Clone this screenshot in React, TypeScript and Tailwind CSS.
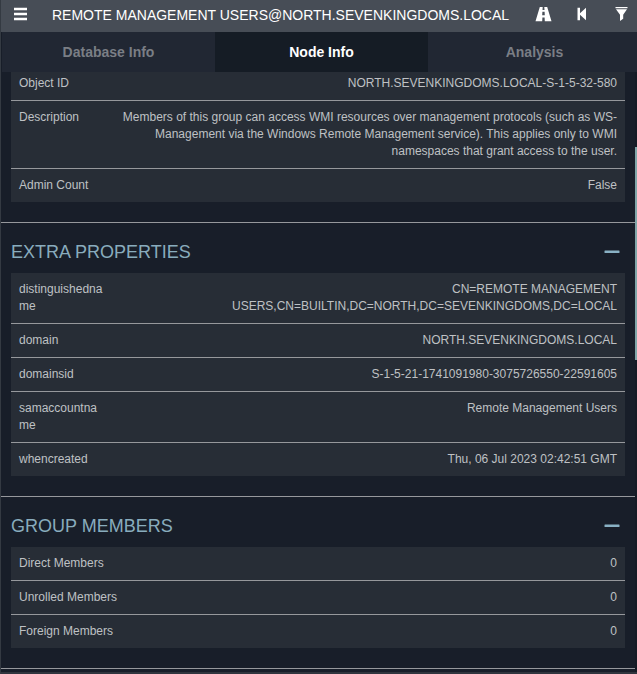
import type { ReactNode } from "react";

type Row = { label: string; value: string };

const overview: Row[] = [
  { label: "Object ID", value: "NORTH.SEVENKINGDOMS.LOCAL-S-1-5-32-580" },
  {
    label: "Description",
    value:
      "Members of this group can access WMI resources over management protocols (such as WS-Management via the Windows Remote Management service). This applies only to WMI namespaces that grant access to the user.",
  },
  { label: "Admin Count", value: "False" },
];

const extra: Row[] = [
  {
    label: "distinguishedname",
    value: "CN=REMOTE MANAGEMENT USERS,CN=BUILTIN,DC=NORTH,DC=SEVENKINGDOMS,DC=LOCAL",
  },
  { label: "domain", value: "NORTH.SEVENKINGDOMS.LOCAL" },
  { label: "domainsid", value: "S-1-5-21-1741091980-3075726550-22591605" },
  { label: "samaccountname", value: "Remote Management Users" },
  { label: "whencreated", value: "Thu, 06 Jul 2023 02:42:51 GMT" },
];

const members: Row[] = [
  { label: "Direct Members", value: "0" },
  { label: "Unrolled Members", value: "0" },
  { label: "Foreign Members", value: "0" },
];

function PropertyTable({ rows, name, narrow }: { rows: Row[]; name: string; narrow?: boolean }) {
  return (
    <table aria-label={name} className="w-full table-fixed border-separate border-spacing-0 bg-[#272d36] text-xs/[17px] text-[#bfc1c4]">
      <colgroup>
        <col className={narrow ? "w-[102px]" : "w-1/2"} />
        <col />
      </colgroup>
      <tbody className="[&>tr:not(:last-child)>*]:border-b [&>tr:not(:last-child)>*]:border-[#96989c]">
        {rows.map((row) => (
          <tr key={row.label}>
            <th scope="row" className="p-2 text-left align-top font-normal wrap-break-word">
              {row.label}
            </th>
            <td className="p-2 text-right align-top">{row.value}</td>
          </tr>
        ))}
      </tbody>
    </table>
  );
}

function Section({ title, children }: { title: string; children: ReactNode }) {
  return (
    <section className="border-t border-[#96989c] px-[10px] pb-5">
      <div className="flex h-[50px] items-center justify-between pt-2 pr-[5px]">
        <h2 className="text-lg text-[#89acbd]">{title}</h2>
        <button type="button" aria-label={"Collapse " + title} className="flex h-4 w-4 items-center">
          <svg viewBox="0 0 16 16" className="h-4 w-4" fill="#89b1c4">
            <rect x="0.5" y="6.5" width="15" height="2.5" rx="0.5" />
          </svg>
        </button>
      </div>
      {children}
    </section>
  );
}

function Tab({ label, active }: { label: string; active?: boolean }) {
  return (
    <button
      type="button"
      role="tab"
      aria-selected={!!active}
      className={
        active
          ? "flex-1 bg-[#151c25] text-sm font-bold text-white"
          : "flex-1 bg-[#212733] text-sm font-bold text-[#7a7e85]"
      }
    >
      {label}
    </button>
  );
}

export default function App() {
  return (
    <main className="flex h-screen flex-col overflow-hidden border-l border-[#343a42] bg-[#181e29] font-['Liberation_Sans',Arial,sans-serif]">
      <header className="flex h-8 shrink-0 items-center bg-[#474d56] pr-[9px] pb-1 pl-[13px] text-white">
        <button type="button" aria-label="Menu" className="mr-[25px]">
          <svg viewBox="0 0 13 14" className="h-[14px] w-[13px]" fill="currentColor">
            <path d="M0 .7h13v2.6H0zM0 5.7h13v2.6H0zM0 10.7h13v2.6H0z" />
          </svg>
        </button>
        <h1 className="flex-1 pt-[2px] text-sm whitespace-nowrap">REMOTE MANAGEMENT USERS@NORTH.SEVENKINGDOMS.LOCAL</h1>
        <div className="flex items-center">
          <button type="button" aria-label="Pathfinding" className="mr-[25px]">
            <svg viewBox="0 0 17 16" className="h-4 w-[17px]" fill="currentColor">
              <path d="M4.8 1H7.7L7.5 4H9.5L9.3 1H12.2L16.5 15.2H9.8L9.6 11.4H7.4L7.2 15.2H.5ZM7.4 5.7 7.2 9.2H9.8L9.6 5.7Z" />
            </svg>
          </button>
          <button type="button" aria-label="Back" className="mr-[28px]">
            <svg viewBox="0 0 10 14" className="h-[14px] w-[10px]" fill="currentColor">
              <path d="M.5 .8H3V6.2L9 .8V13.2L3 7.8V13.2H.5Z" />
            </svg>
          </button>
          <button type="button" aria-label="Filter">
            <svg viewBox="0 0 13 14" className="h-[14px] w-[13px]" fill="currentColor">
              <path d="M.5 0H12.5V1.2H.5ZM1 2.2H12L8.2 7.8V11.8L5 14V7.8Z" />
            </svg>
          </button>
        </div>
      </header>
      <div role="tablist" className="-mr-1 flex h-10 shrink-0 pl-px">
        <Tab label="Database Info" />
        <Tab label="Node Info" active />
        <Tab label="Analysis" />
      </div>
      <div className="flex min-h-0 flex-1 border-b-2 border-[#30353e]">
        <div className="min-w-0 flex-1 overflow-hidden">
          <div className="-mt-[5px]">
            <div className="px-[10px] pb-5">
              <PropertyTable rows={overview} name="Overview" narrow />
            </div>
            <Section title="EXTRA PROPERTIES">
              <PropertyTable rows={extra} name="Extra properties" narrow />
            </Section>
            <Section title="GROUP MEMBERS">
              <PropertyTable rows={members} name="Group members" />
            </Section>
            <div className="border-t border-[#96989c]" />
          </div>
        </div>
        <div className="w-[2px] shrink-0 bg-[#151b25] pt-[75px]">
          <div className="h-[213px] bg-[#7fa6a8]" />
        </div>
      </div>
    </main>
  );
}
